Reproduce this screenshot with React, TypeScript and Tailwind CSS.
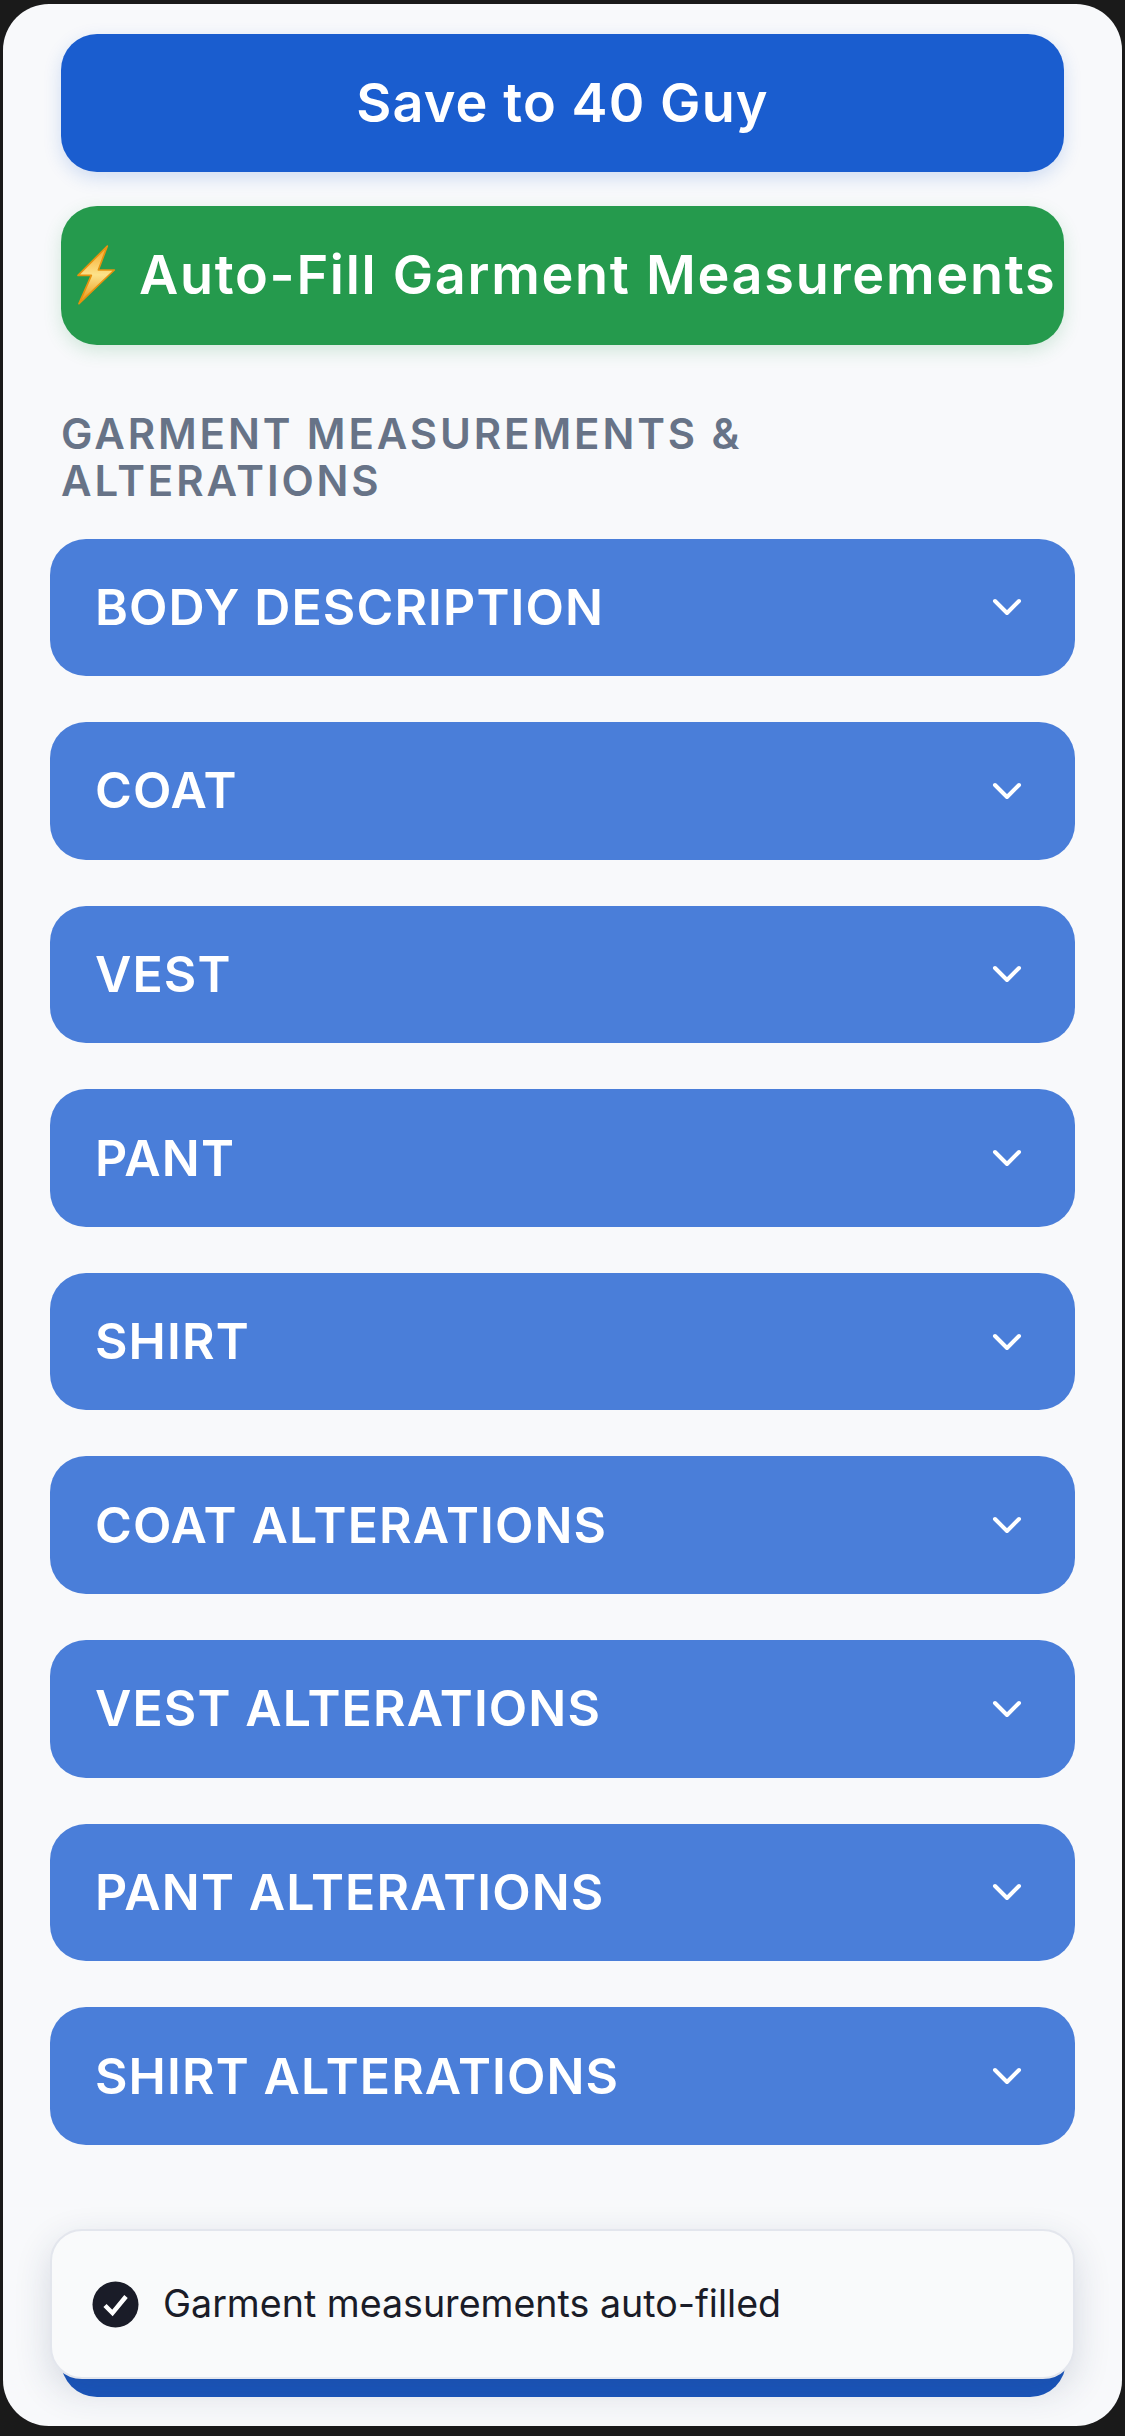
import React from 'react';
import { ChevronDown } from 'lucide-react';

const sections = [
  'BODY DESCRIPTION',
  'COAT',
  'VEST',
  'PANT',
  'SHIRT',
  'COAT ALTERATIONS',
  'VEST ALTERATIONS',
  'PANT ALTERATIONS',
  'SHIRT ALTERATIONS',
];

const BoltIcon = () => (
  <svg width="42" height="60" viewBox="75 92 126 180" className="shrink-0">
    <defs>
      <linearGradient id="bolt" x1="0" y1="0" x2="0" y2="1">
        <stop offset="0" stopColor="#f5a623" />
        <stop offset="0.5" stopColor="#fde28a" />
        <stop offset="1" stopColor="#e8920f" />
      </linearGradient>
    </defs>
    <path
      d="M172 95 L84 183 L124 183 L87 268 L193 167 L145 167 Z"
      fill="url(#bolt)"
      stroke="#e8920f"
      strokeWidth="5"
      strokeLinejoin="round"
    />
  </svg>
);

export default function App() {
  return (
    <div className="h-[2436px] w-[1125px] overflow-hidden bg-[#1a1a1a] px-[3px] pt-[4px] font-['Inter',sans-serif]">
      <div className="relative h-[2422px] overflow-hidden rounded-[46px] bg-[#f8f9fb] px-[47px] pt-[30px]">
        <div className="mx-[11px] flex flex-col gap-[34px]">
          <button className="h-[138px] rounded-[36px] bg-[#1a5dcf] pb-[2px] text-[54px] font-semibold tracking-[1.1px] text-white shadow-[0_6px_18px_rgba(26,93,207,0.18)]">
            Save to 40 Guy
          </button>
          <button className="flex h-[139px] items-center gap-[22px] rounded-[36px] bg-[#259a4d] pb-[2px] pl-[14px] text-[54px] font-semibold tracking-[1.7px] whitespace-nowrap text-white shadow-[0_6px_18px_rgba(37,154,77,0.18)]">
            <BoltIcon />
            <span>Auto-Fill Garment Measurements</span>
          </button>
        </div>

        <h2 className="mx-[11px] mt-[65px] text-[42px] leading-[47px] font-semibold tracking-[2.9px] text-[#677387]">
          GARMENT MEASUREMENTS &amp;
          <br />
          ALTERATIONS
        </h2>

        <div className="mt-[34.5px] flex flex-col gap-[46px]">
          {sections.map((title) => (
            <div
              key={title}
              className="flex h-[137.6px] items-center justify-between rounded-[36px] bg-[#4a7ed9] pr-[44px] pl-[45px] text-[50px] font-semibold tracking-[1.1px] text-white"
            >
              <span>{title}</span>
              <ChevronDown size={48} strokeWidth={2} />
            </div>
          ))}
        </div>

        <button className="mx-[11px] mt-[114.5px] h-[138px] w-[1005px] rounded-[36px] bg-[#1a56bd]" />

        {/* Toast */}
        <div className="absolute top-[2225px] left-[47px] flex h-[150px] w-[1025px] items-center gap-[24px] rounded-[32px] border-2 border-[#e3e6ed] bg-[#f9fafb] pl-[40px] shadow-[0_12px_36px_rgba(30,50,90,0.16)]">
          <svg width="47" height="47" viewBox="0 0 47 47" className="shrink-0">
            <circle cx="23.5" cy="23.5" r="23" fill="#1a1c28" />
            <path d="M13 24.5 L20.5 32 L34 15.5" fill="none" stroke="#ffffff" strokeWidth="4.5" />
          </svg>
          <span className="text-[37.6px] font-normal text-[#1a1c28]">Garment measurements auto-filled</span>
        </div>
      </div>
    </div>
  );
}
